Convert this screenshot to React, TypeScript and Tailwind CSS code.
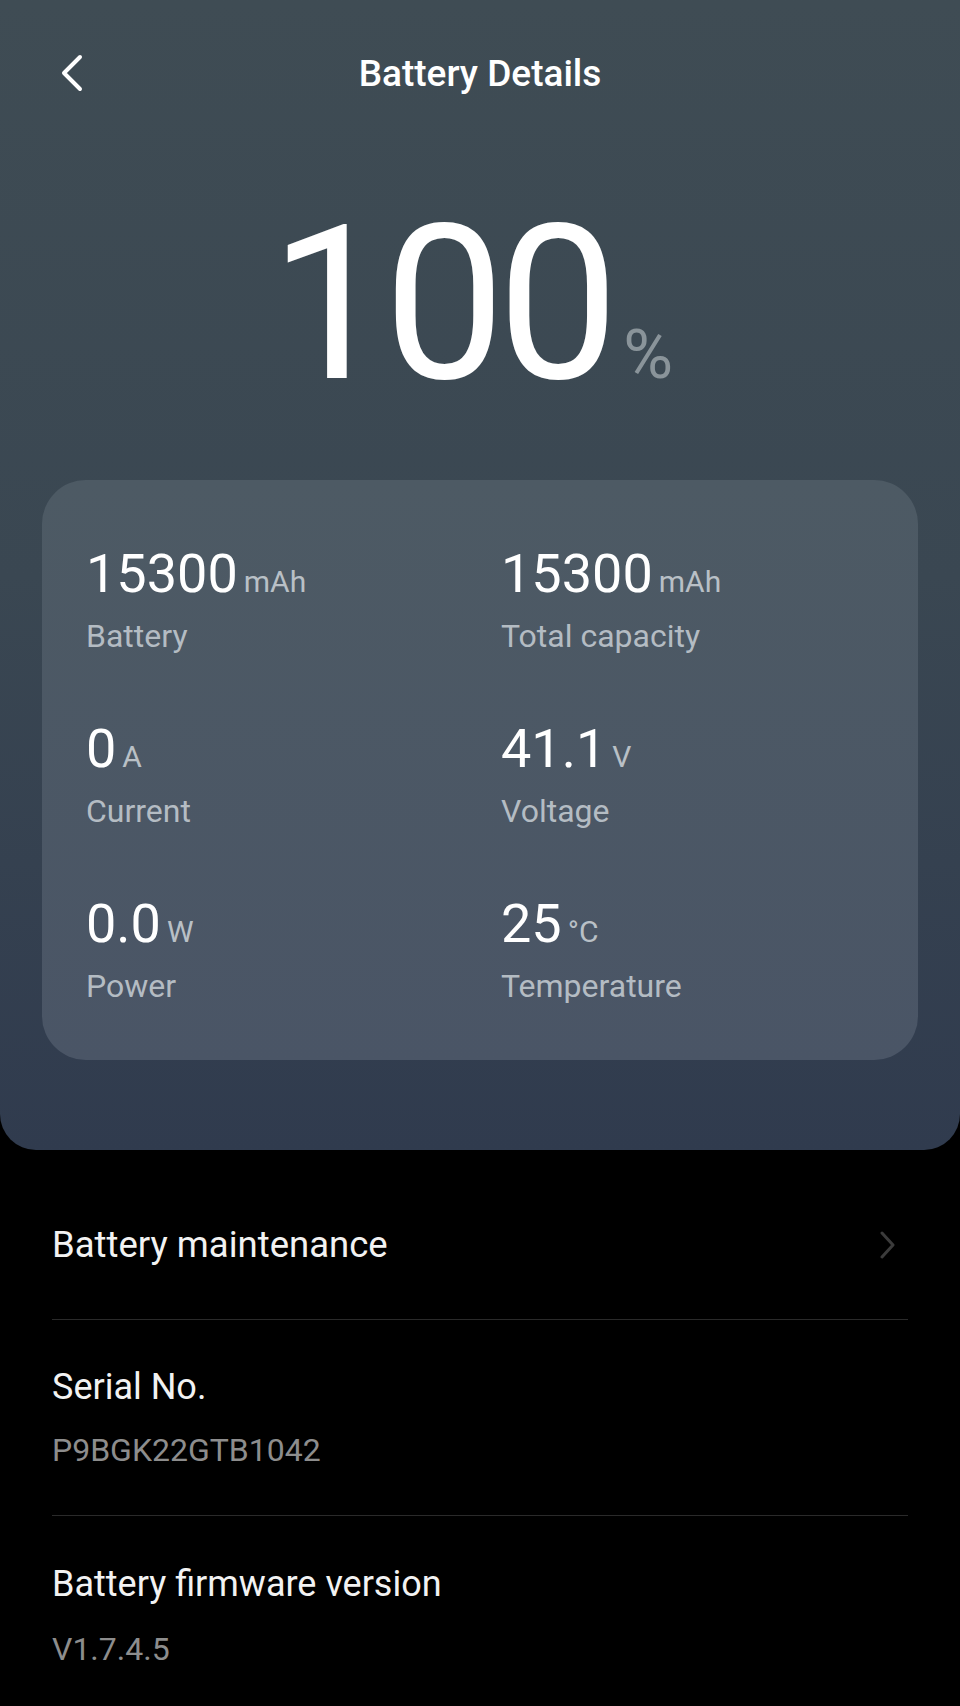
import React from 'react';

type Stat = {
  value: string
  unit: string
  label: string
}

const stats: Stat[] = [
  { value: '15300', unit: 'mAh', label: 'Battery' },
  { value: '15300', unit: 'mAh', label: 'Total capacity' },
  { value: '0', unit: 'A', label: 'Current' },
  { value: '41.1', unit: 'V', label: 'Voltage' },
  { value: '0.0', unit: 'W', label: 'Power' },
  { value: '25', unit: '°C', label: 'Temperature' },
];

const StatItem: React.FC<{ stat: Stat }> = ({ stat }) => (
  <div className="flex flex-col">
    <div className="flex items-baseline gap-[6px]">
      <span className="text-[54px] leading-none text-white">{stat.value}</span>
      <span className="text-[30px] leading-none text-[#b9c0c6]">{stat.unit}</span>
    </div>
    <span className="mt-[19px] text-[32px] leading-none text-[#b4bcc3]">{stat.label}</span>
  </div>
);

const InfoRow: React.FC<{ title: string; value: string }> = ({ title, value }) => (
  <div className="flex flex-col pt-[49px] pb-[49px]">
    <span className="text-[36px] leading-none text-[#f2f2f2]">{title}</span>
    <span className="mt-[29px] text-[32px] leading-none text-[#8d8d8d]">{value}</span>
  </div>
);

export default function App() {
  return (
    <div className="min-h-[1706px] w-full bg-black font-['Roboto',sans-serif]">
      {/* top panel */}
      <div className="flex flex-col rounded-b-[36px] bg-linear-to-b from-[#3f4c54] via-[#3a4752] to-[#303b4e] pb-[90px]">
        <div className="grid grid-cols-[1fr_auto_1fr] items-center pt-[54px]">
          <div className="pl-[59px]">
            <svg width="25" height="38" viewBox="0 0 25 38" fill="none">
              <path d="M21 3 L5 19 L21 35" stroke="white" strokeWidth="4" strokeLinecap="round" strokeLinejoin="round" />
            </svg>
          </div>
          <h1 className="text-[37px] font-medium leading-none text-white">Battery Details</h1>
          <div />
        </div>

        <div className="mt-[105px] flex items-baseline justify-center">
          <span className="text-[216px] leading-none tracking-[-0.035em] text-white">100</span>
          <span className="ml-[12px] pr-[17px] text-[68px] leading-none text-[#8a949a]">%</span>
        </div>

        <div className="mx-[42px] mt-[67px] grid grid-cols-[415px_1fr] gap-y-[70px] rounded-[44px] bg-linear-to-b from-[#4d5a64] to-[#4a5566] pt-[67px] pb-[58px] pl-[44px]">
          {stats.map((s) => (
            <StatItem key={s.label} stat={s} />
          ))}
        </div>
      </div>

      {/* bottom list */}
      <div className="px-[52px]">
        <div className="flex items-center justify-between pt-[77px] pb-[55px]">
          <span className="text-[36.5px] leading-none text-[#f2f2f2]">Battery maintenance</span>
          <svg className="mr-[12px]" width="16" height="28" viewBox="0 0 16 28" fill="none">
            <path d="M2 2 L13 14 L2 26" stroke="#3b3b3b" strokeWidth="3" strokeLinecap="round" strokeLinejoin="round" />
          </svg>
        </div>
        <div className="h-px bg-[#2a2a2a]" />
        <InfoRow title="Serial No." value="P9BGK22GTB1042" />
        <div className="h-px bg-[#2a2a2a]" />
        <div className="flex flex-col pt-[50px] pb-[44px]">
          <span className="text-[36px] leading-none text-[#f2f2f2]">Battery firmware version</span>
          <span className="mt-[31px] text-[32px] leading-none text-[#8d8d8d]">V1.7.4.5</span>
        </div>
      </div>
    </div>
  );
}
